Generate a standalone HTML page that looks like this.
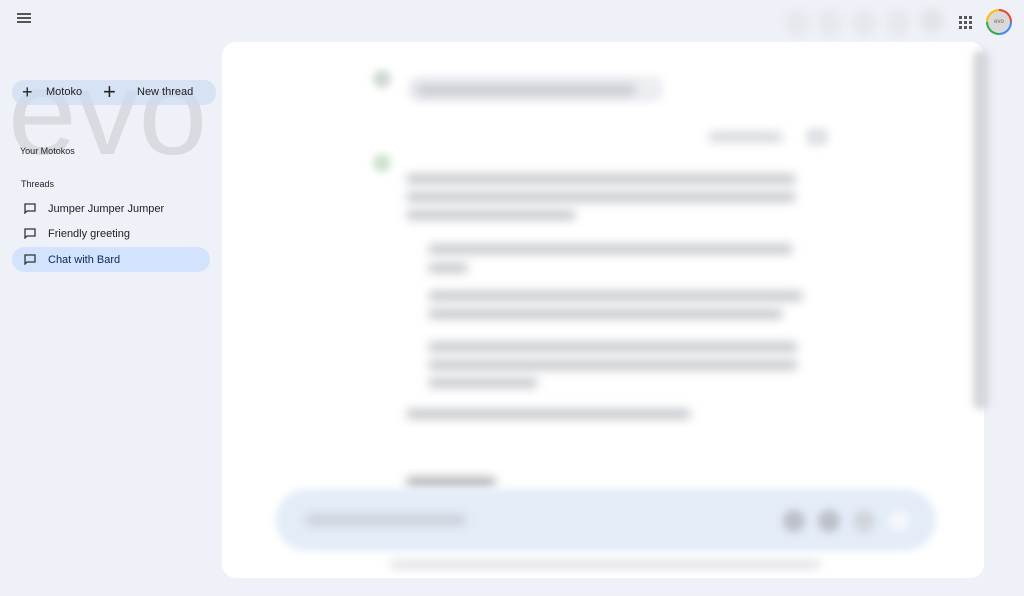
<!DOCTYPE html>
<html><head><meta charset="utf-8"><style>
body{margin:0;width:1024px;height:596px;background:#eef1f7;font-family:"Liberation Sans",sans-serif;position:relative;overflow:hidden}
.a{position:absolute}
.b{filter:blur(4px)}
.ln{position:absolute;height:10px;background:#c4c7cc;border-radius:5px;filter:blur(5px)}
.item{position:absolute;left:12px;width:198px;height:25px;border-radius:13px;font-size:11px;color:#1f1f1f;display:flex;align-items:center}
.item svg{margin-left:12px;margin-right:12px}
</style></head><body>
<div class="a" style="left:8px;top:53px;font-size:120px;color:#d9dbe0;line-height:120px;transform:scaleX(1.03);transform-origin:0 0">evo</div>
<div class="a" style="left:17px;top:13px;width:14px;height:2px;background:#555;box-shadow:0 4px 0 #555,0 8px 0 #555"></div>
<div class="a b" style="left:785px;top:10px;width:24px;height:26px;background:#e6e8ec;border-radius:50%"></div>
<div class="a b" style="left:818px;top:10px;width:24px;height:26px;background:#e6e8ec;border-radius:50%"></div>
<div class="a b" style="left:852px;top:10px;width:24px;height:26px;background:#e6e8ec;border-radius:50%"></div>
<div class="a b" style="left:886px;top:10px;width:24px;height:26px;background:#e6e8ec;border-radius:50%"></div>
<div class="a b" style="left:920px;top:8px;width:24px;height:26px;background:#e2e4e8;border-radius:50%"></div>
<svg class="a" style="left:959px;top:16px" width="13" height="13" viewBox="0 0 13 13" fill="#555"><g><rect x="0" y="0" width="3" height="3"/><rect x="5" y="0" width="3" height="3"/><rect x="10" y="0" width="3" height="3"/><rect x="0" y="5" width="3" height="3"/><rect x="5" y="5" width="3" height="3"/><rect x="10" y="5" width="3" height="3"/><rect x="0" y="10" width="3" height="3"/><rect x="5" y="10" width="3" height="3"/><rect x="10" y="10" width="3" height="3"/></g></svg>
<div class="a" style="left:986px;top:9px;width:26px;height:26px;border-radius:50%;background:conic-gradient(#ea4335 0 25%,#4285f4 25% 50%,#34a853 50% 75%,#fbbc05 75%);"></div>
<div class="a" style="left:988px;top:11px;width:22px;height:22px;border-radius:50%;background:#d9d9d9;font-size:6px;color:#666;text-align:center;line-height:22px">evo</div>
<!-- main panel -->
<div class="a" style="left:222px;top:42px;width:762px;height:536px;background:#fff;border-radius:14px"></div>
<div class="a b" style="left:973px;top:50px;width:16px;height:360px;background:#d4d6da;border-radius:8px"></div>
<div class="a b" style="left:373px;top:70px;width:18px;height:18px;border-radius:50%;background:#cfd8cf"></div>
<div class="a b" style="left:408px;top:76px;width:255px;height:26px;background:#eceef2;border-radius:10px"></div>
<div class="ln" style="left:416px;top:85px;width:220px"></div>
<div class="ln" style="left:708px;top:132px;width:75px;background:#d4d6da"></div>
<div class="a b" style="left:806px;top:128px;width:22px;height:18px;background:#e0e2e6;border-radius:6px"></div>
<div class="a b" style="left:373px;top:154px;width:18px;height:18px;border-radius:50%;background:#cde2cd"></div>
<div class="ln" style="left:406px;top:174px;width:390px"></div>
<div class="ln" style="left:406px;top:192px;width:390px"></div>
<div class="ln" style="left:406px;top:210px;width:170px"></div>
<div class="ln" style="left:428px;top:244px;width:365px"></div>
<div class="ln" style="left:428px;top:263px;width:40px"></div>
<div class="ln" style="left:428px;top:291px;width:375px"></div>
<div class="ln" style="left:428px;top:309px;width:355px"></div>
<div class="ln" style="left:428px;top:342px;width:370px"></div>
<div class="ln" style="left:428px;top:360px;width:370px"></div>
<div class="ln" style="left:428px;top:378px;width:110px"></div>
<div class="ln" style="left:406px;top:409px;width:285px"></div>
<div class="ln" style="left:406px;top:477px;width:90px;background:#aeb1b6"></div>
<div class="a b" style="left:276px;top:489px;width:660px;height:62px;background:#e4ecf8;border-radius:31px"></div>
<div class="ln" style="left:306px;top:515px;width:160px;background:#c8cdd5"></div>
<div class="a b" style="left:783px;top:510px;width:22px;height:22px;border-radius:50%;background:#bcc0c8"></div>
<div class="a b" style="left:818px;top:510px;width:22px;height:22px;border-radius:50%;background:#bcc0c8"></div>
<div class="a b" style="left:853px;top:510px;width:22px;height:22px;border-radius:50%;background:#d2d6dc"></div>
<div class="a b" style="left:888px;top:510px;width:22px;height:22px;border-radius:50%;background:#f4f6fa"></div>
<div class="ln" style="left:390px;top:561px;width:430px;height:7px;background:#d8dade"></div>
<!-- sidebar -->
<div class="a" style="left:12px;top:80px;width:204px;height:25px;background:rgba(205,220,243,.7);border-radius:12px"></div>
<div class="a" style="left:22px;top:84px;font-size:18px;color:#222;line-height:16px">+</div>
<div class="a" style="left:46px;top:86px;font-size:11px;color:#1f1f1f">Motoko</div>
<div class="a" style="left:103px;top:82px;font-size:22px;color:#222;line-height:20px">+</div>
<div class="a" style="left:137px;top:86px;font-size:11px;color:#1f1f1f">New thread</div>
<div class="a" style="left:20px;top:146px;font-size:9px;color:#1f1f1f">Your Motokos</div>
<div class="a" style="left:21px;top:179px;font-size:9px;color:#1f1f1f">Threads</div>
<div class="item" style="top:196px"><svg width="12" height="11" viewBox="0 0 12 11" fill="none" stroke="#333" stroke-width="1.3"><path d="M1 1h10v7H3L1 10z"/></svg>Jumper Jumper Jumper</div>
<div class="item" style="top:221px"><svg width="12" height="11" viewBox="0 0 12 11" fill="none" stroke="#333" stroke-width="1.3"><path d="M1 1h10v7H3L1 10z"/></svg>Friendly greeting</div>
<div class="item" style="top:247px;background:#d3e3fd;color:#0b2a55"><svg width="12" height="11" viewBox="0 0 12 11" fill="none" stroke="#333" stroke-width="1.3"><path d="M1 1h10v7H3L1 10z"/></svg>Chat with Bard</div>
</body></html>
